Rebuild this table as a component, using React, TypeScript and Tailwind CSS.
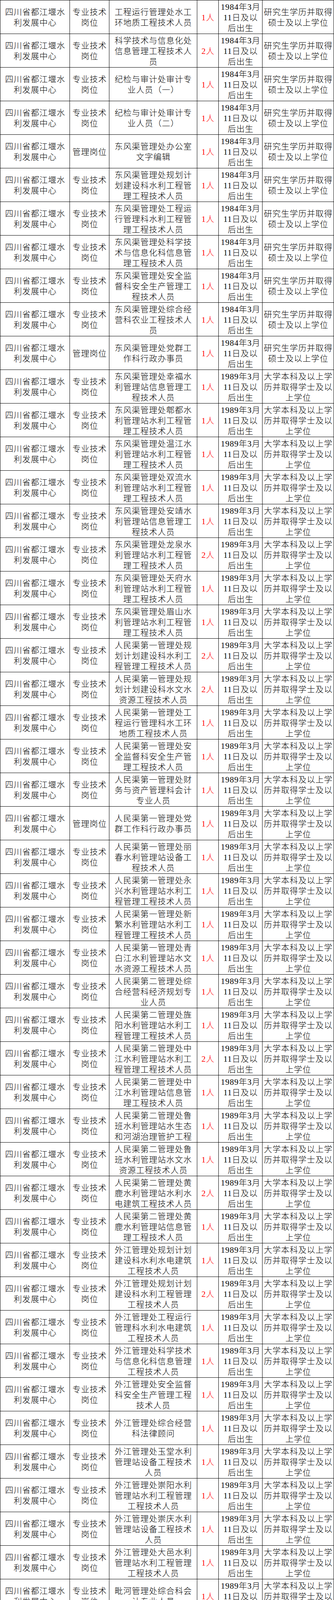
import React from "react";

type Row = [string, string, number];

const ROWS: Row[] = [
  ["z", "工程运行管理处水工环地质工程技术人员", 1],
  ["z", "科学技术与信息化处信息管理工程技术人员", 2],
  ["z", "纪检与审计处审计专业人员（一）", 1],
  ["z", "纪检与审计处审计专业人员（二）", 1],
  ["g", "东风渠管理处办公室文字编辑", 1],
  ["z", "东风渠管理处规划计划建设科水利工程管理工程技术人员", 1],
  ["z", "东风渠管理处工程运行管理科水利工程管理工程技术人员", 1],
  ["z", "东风渠管理处科学技术与信息化科信息管理工程技术人员", 1],
  ["z", "东风渠管理处安全监督科安全生产管理工程技术人员", 1],
  ["z", "东风渠管理处综合经营科农业工程技术人员", 1],
  ["g", "东风渠管理处党群工作科行政办事员", 1],
  ["z", "东风渠管理处幸福水利管理站信息管理工程技术人员", 1],
  ["z", "东风渠管理处郫都水利管理站水利工程管理工程技术人员", 1],
  ["z", "东风渠管理处温江水利管理站水利工程管理工程技术人员", 1],
  ["z", "东风渠管理处双流水利管理站水利工程管理工程技术人员", 1],
  ["z", "东风渠管理处安靖水利管理站信息管理工程技术人员", 1],
  ["z", "东风渠管理处龙泉水利管理站水利工程管理工程技术人员", 2],
  ["z", "东风渠管理处天府水利管理站水利工程管理工程技术人员", 1],
  ["z", "东风渠管理处眉山水利管理站水利工程管理工程技术人员", 1],
  ["z", "人民渠第一管理处规划计划建设科水利工程管理工程技术人员", 2],
  ["z", "人民渠第一管理处规划计划建设科水文水资源工程技术人员", 2],
  ["z", "人民渠第一管理处工程运行管理科水工环地质工程技术人员", 1],
  ["z", "人民渠第一管理处安全监督科安全生产管理工程技术人员", 1],
  ["z", "人民渠第一管理处财务与资产管理科会计专业人员", 1],
  ["g", "人民渠第一管理处党群工作科行政办事员", 1],
  ["z", "人民渠第一管理处丽春水利管理站设备工程技术人员", 1],
  ["z", "人民渠第一管理处永兴水利管理站水利工程管理工程技术人员", 1],
  ["z", "人民渠第一管理处新繁水利管理站水利工程管理工程技术人员", 1],
  ["z", "人民渠第一管理处青白江水利管理站水文水资源工程技术人员", 1],
  ["z", "人民渠第二管理处综合经营科经济规划专业人员", 1],
  ["z", "人民渠第二管理处旌阳水利管理站水利工程管理工程技术人员", 1],
  ["z", "人民渠第二管理处中江水利管理站水利工程管理工程技术人员", 2],
  ["z", "人民渠第二管理处中江水利管理站信息管理工程技术人员", 1],
  ["z", "人民渠第二管理处鲁班水利管理站水生态和河湖治理管护工程技术人员", 1],
  ["z", "人民渠第二管理处鲁班水利管理站水文水资源工程技术人员", 1],
  ["z", "人民渠第二管理处黄鹿水利管理站水利水电建筑工程技术人员", 2],
  ["z", "人民渠第二管理处黄鹿水利管理站信息管理工程技术人员", 1],
  ["z", "外江管理处规划计划建设科水利水电建筑工程技术人员", 1],
  ["z", "外江管理处规划计划建设科水利工程管理工程技术人员", 2],
  ["z", "外江管理处工程运行管理科水利水电建筑工程技术人员", 1],
  ["z", "外江管理处科学技术与信息化科信息管理工程技术人员", 1],
  ["z", "外江管理处安全监督科安全生产管理工程技术人员", 1],
  ["z", "外江管理处综合经营科法律顾问", 1],
  ["z", "外江管理处玉堂水利管理站设备工程技术人员", 1],
  ["z", "外江管理处崇阳水利管理站水利工程管理工程技术人员", 1],
  ["z", "外江管理处崇庆水利管理站设备工程技术人员", 1],
  ["z", "外江管理处大邑水利管理站水利工程管理工程技术人员", 1],
  ["z", "毗河管理处综合科会计专业人员", 1],
  ["z", "毗河管理处东部新区水利管理站水利水电建筑工程技术人员", 1],
  ["z", "毗河管理处东部新区水利管理站信息管理工程技术人员", 1],
  ["z", "毗河管理处苟家滩水利管理站设备工程技术人员", 1],
  ["z", "毗河管理处资阳水利管理站水利水电建筑工程技术人员", 2],
  ["z", "黑龙滩管理处规划计划建设科水利工程管理工程技术人员", 2],
  ["z", "黑龙滩管理处工程运行管理科水利工程管理工程技术人员", 3],
  ["z", "黑龙滩管理处科学技术与信息化科网络编辑", 1],
  ["z", "黑龙滩管理处科学技术与信息化科信息管理工程技术人员", 1],
  ["z", "黑龙滩管理处财务与资产管理科会计专业人员", 1],
  ["z", "黑龙滩管理处黑龙滩水库管理站设备工程技术人员", 1],
  ["z", "黑龙滩管理处李家沟水库管理站水利工程管理工程技术人员", 1],
  ["z", "黑龙滩管理处钟祥水利管理站水利工程管理工程技术人员", 1],
  ["z", "黑龙滩管理处富加水利管理站水利水电建筑工程技术人员", 1],
  ["g", "通济堰管理处办公室文字编辑", 1],
  ["z", "通济堰管理处规划计划建设科水利水电建筑工程技术人员", 1],
  ["z", "通济堰管理处工程运行管理科水利工程管理工程技术人员", 1],
  ["z", "通济堰管理处科学技术与信息化科信息管理工程技术人员", 1],
  ["z", "通济堰管理处新津水利管理站水文水资源工程技术人员", 1],
  ["z", "都江堰渠首管理处办公室人力资源管理专业人员", 1],
  ["z", "都江堰渠首管理处办公室网络编辑", 1],
  ["z", "都江堰渠首管理处工程管理与水利保护科水利工程管理工程技术人员", 1],
  ["z", "都江堰渠首管理处工程管理与水利保护科水工环地质工程技术人员", 1],
];

function chunk(s: string, n: number, max = 3): string[] {
  const arr = Array.from(s);
  const out: string[] = [];
  for (let i = 0; i < arr.length; i += n) out.push(arr.slice(i, i + n).join(""));
  return out.slice(0, max);
}

function Cell({
  w,
  lines,
  red,
}: {
  w: string;
  lines: string[];
  red?: boolean;
}) {
  return (
    <div
      className={`${w} h-full shrink-0 border-r border-black flex flex-col items-center justify-center overflow-hidden pt-[3px] ${
        red ? "text-[#ff0000]" : "text-black"
      }`}
    >
      {lines.map((l, i) => (
        <div key={i} className="whitespace-nowrap leading-[27px] pl-[1px]">
          {l}
        </div>
      ))}
    </div>
  );
}

export default function App() {
  return (
    <div className="w-[855px] bg-white border-t border-l border-black text-[21px] font-light tracking-[1px] font-['Liberation_Serif','Noto_Sans_CJK_SC',serif]">
      {ROWS.map((r, idx) => {
        const [type, job, count] = r;
        const isOld = idx < 11;
        return (
          <div key={idx} className="flex h-[86px] border-b border-black">
            <Cell w="w-[178px]" lines={["四川省都江堰水", "利发展中心"]} />
            <Cell
              w="w-[101px]"
              lines={type === "g" ? ["管理岗位"] : ["专业技术", "岗位"]}
            />
            <Cell w="w-[225px]" lines={chunk(job, 9)} />
            <Cell w="w-[55px]" lines={[`${count}人`]} red />
            <Cell
              w="w-[112px]"
              lines={[isOld ? "1984年3月" : "1989年3月", "11日及以", "后出生"]}
            />
            <Cell
              w="w-[183px]"
              lines={
                isOld
                  ? ["研究生学历并取得", "硕士及以上学位"]
                  : ["大学本科及以上学", "历并取得学士及以", "上学位"]
              }
            />
          </div>
        );
      })}
    </div>
  );
}
